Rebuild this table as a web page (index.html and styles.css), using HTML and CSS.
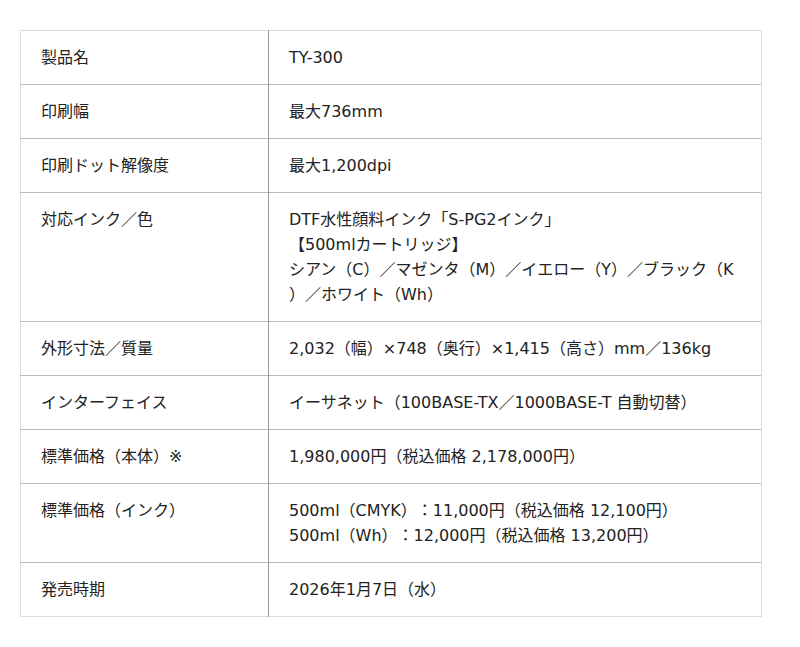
FILE: index.html
```html
<!DOCTYPE html>
<html lang="ja">
<head>
<meta charset="utf-8">
<link rel="stylesheet" href="styles.css">
</head>
<body>
<div class="wrap">
<table class="spec">
<tr><th>製品名</th><td>TY-300</td></tr>
<tr><th>印刷幅</th><td>最大736mm</td></tr>
<tr><th>印刷ドット解像度</th><td>最大1,200dpi</td></tr>
<tr><th>対応インク／色</th><td>DTF水性顔料インク「S-PG2インク」<br>【500mlカートリッジ】<br>シアン（C）／マゼンタ（M）／イエロー（Y）／ブラック（K）／ホワイト（Wh）</td></tr>
<tr><th>外形寸法／質量</th><td>2,032（幅）×748（奥行）×1,415（高さ）mm／136kg</td></tr>
<tr><th>インターフェイス</th><td>イーサネット（100BASE-TX／1000BASE-T 自動切替）</td></tr>
<tr><th>標準価格（本体）※</th><td>1,980,000円（税込価格 2,178,000円）</td></tr>
<tr><th>標準価格（インク）</th><td>500ml（CMYK）：11,000円（税込価格 12,100円）<br>500ml（Wh）：12,000円（税込価格 13,200円）</td></tr>
<tr><th>発売時期</th><td>2026年1月7日（水）</td></tr>
</table>
</div>
</body>
</html>
```
FILE: styles.css
```css
html, body {
  margin: 0;
  padding: 0;
  background: #fff;
}
.wrap {
  padding: 30px 38px 30px 20px;
}
.spec {
  width: 742px;
  border-collapse: collapse;
  border: 1px solid #dddddd;
  font-family: "DejaVu Sans", "Noto Sans CJK JP", sans-serif;
  font-size: 16px;
  line-height: 25px;
  color: #222;
  text-spacing-trim: space-all;
  line-break: anywhere;
}
.spec th, .spec td {
  text-align: left;
  vertical-align: top;
  font-weight: normal;
  padding: 14px 20px 14px 20px;
  border-top: 1px solid #bbbbbb;
}
.spec tr:first-child th, .spec tr:first-child td {
  border-top: 1px solid #dddddd;
}
.spec th {
  width: 207px;
  border-right: 1px solid #999999;
}
.spec td {
  border-right: 1px solid #dddddd;
}
```
